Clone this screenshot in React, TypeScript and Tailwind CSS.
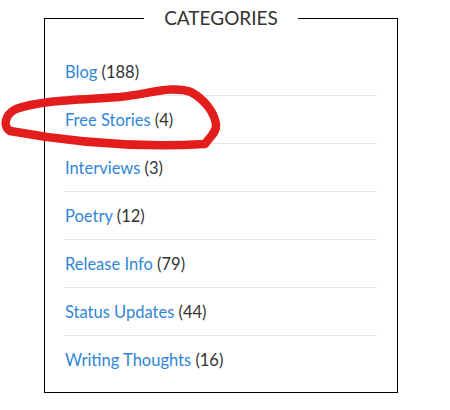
const categories = [
  { name: "Blog", count: 188 },
  { name: "Free Stories", count: 4 },
  { name: "Interviews", count: 3 },
  { name: "Poetry", count: 12 },
  { name: "Release Info", count: 79 },
  { name: "Status Updates", count: 44 },
  { name: "Writing Thoughts", count: 16 },
];

export default function App() {
  return (
    <div className="relative h-[410px] w-[450px] overflow-hidden bg-white font-['Lato',sans-serif]">
      <fieldset className="ml-[44px] mt-[6px] w-[354px] border border-black px-5 pb-[9px] pt-[18px]">
        <legend className="mx-auto px-5 text-[19px] leading-6 uppercase text-[#333]">
          Categories
        </legend>
        <ul>
          {categories.map((c, i) => (
            <li
              key={c.name}
              className={
                i < categories.length - 1
                  ? "border-b border-[#e6e6e6] pb-[11px] pt-3 text-[16.5px] leading-6 text-[#333]"
                  : "pb-[11px] pt-3 text-[16.5px] leading-6 text-[#333]"
              }
            >
              <a href="#" className="text-[#2f86d5]">
                {c.name}
              </a>{" "}
              ({c.count})
            </li>
          ))}
        </ul>
      </fieldset>

      {/* hand-drawn highlight */}
      <svg
        className="pointer-events-none absolute left-0 top-0"
        width="450"
        height="410"
        viewBox="0 0 450 410"
      >
        <path
          d="M 10 131 C 3 127, 4 115, 16 109 C 40 100, 80 100, 120 97 C 150 94, 172 85, 191 92 C 205 100, 214 112, 216 124 C 217 132, 210 137, 205 144 C 150 147, 80 144, 10 131 Z"
          fill="none"
          stroke="#e31c1c"
          strokeWidth="8.5"
          strokeLinejoin="round"
        />
      </svg>
    </div>
  );
}
